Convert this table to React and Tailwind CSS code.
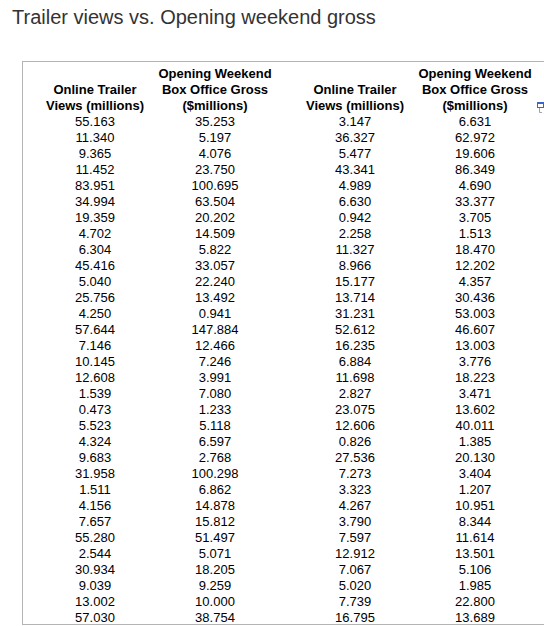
import React from "react";

const c1 = ["55.163","11.340","9.365","11.452","83.951","34.994","19.359","4.702","6.304","45.416","5.040","25.756","4.250","57.644","7.146","10.145","12.608","1.539","0.473","5.523","4.324","9.683","31.958","1.511","4.156","7.657","55.280","2.544","30.934","9.039","13.002","57.030"];
const c2 = ["35.253","5.197","4.076","23.750","100.695","63.504","20.202","14.509","5.822","33.057","22.240","13.492","0.941","147.884","12.466","7.246","3.991","7.080","1.233","5.118","6.597","2.768","100.298","6.862","14.878","15.812","51.497","5.071","18.205","9.259","10.000","38.754"];
const c3 = ["3.147","36.327","5.477","43.341","4.989","6.630","0.942","2.258","11.327","8.966","15.177","13.714","31.231","52.612","16.235","6.884","11.698","2.827","23.075","12.606","0.826","27.536","7.273","3.323","4.267","3.790","7.597","12.912","7.067","5.020","7.739","16.795"];
const c4 = ["6.631","62.972","19.606","86.349","4.690","33.377","3.705","1.513","18.470","12.202","4.357","30.436","53.003","46.607","13.003","3.776","18.223","3.471","13.602","40.011","1.385","20.130","3.404","1.207","10.951","8.344","11.614","13.501","5.106","1.985","22.800","13.689"];

function Head({ lines }) {
  return (
    <div className="w-[120px] text-center font-bold">
      {lines.map((l) => (
        <div key={l}>{l}</div>
      ))}
    </div>
  );
}

export default function App() {
  return (
    <div className="w-[544px] h-[626px] overflow-hidden bg-white font-['Liberation_Sans',Arial,sans-serif]">
      <div className="pl-3 pt-[3px] text-[20px] leading-[28px] text-[#333333]">
        Trailer views vs. Opening weekend gross
      </div>
      <div className="mt-[30px] ml-[22px] w-[540px] h-[564px] border border-[#b4b4b4] overflow-hidden pt-[4px] text-[13px] leading-[16px] text-black">
        <div className="flex pl-[12px]">
          <div className="flex flex-col">
            <div className="flex items-end">
              <Head lines={["Online Trailer", "Views (millions)"]} />
              <Head lines={["Opening Weekend", "Box Office Gross", "($millions)"]} />
              <div className="w-[20px]" />
              <Head lines={["Online Trailer", "Views (millions)"]} />
              <Head lines={["Opening Weekend", "Box Office Gross", "($millions)"]} />
            </div>
            {c1.map((v, i) => (
              <div key={i} className="flex">
                <div className="w-[120px] text-center">{v}</div>
                <div className="w-[120px] text-center">{c2[i]}</div>
                <div className="w-[20px]" />
                <div className="w-[120px] text-center">{c3[i]}</div>
                <div className="w-[120px] text-center">{c4[i]}</div>
              </div>
            ))}
          </div>
          <div className="ml-[2px] mt-[36px]">
            <svg width="8" height="12" viewBox="0 0 8 12">
              <rect x="0.5" y="0.5" width="6" height="5" fill="none" stroke="#3f63c8" strokeWidth="1" />
              <rect x="0" y="0" width="7" height="2" fill="#3f63c8" />
              <path d="M2.5 6 V10.5 H5" fill="none" stroke="#9aa4b8" strokeWidth="1" />
            </svg>
          </div>
        </div>
      </div>
    </div>
  );
}
